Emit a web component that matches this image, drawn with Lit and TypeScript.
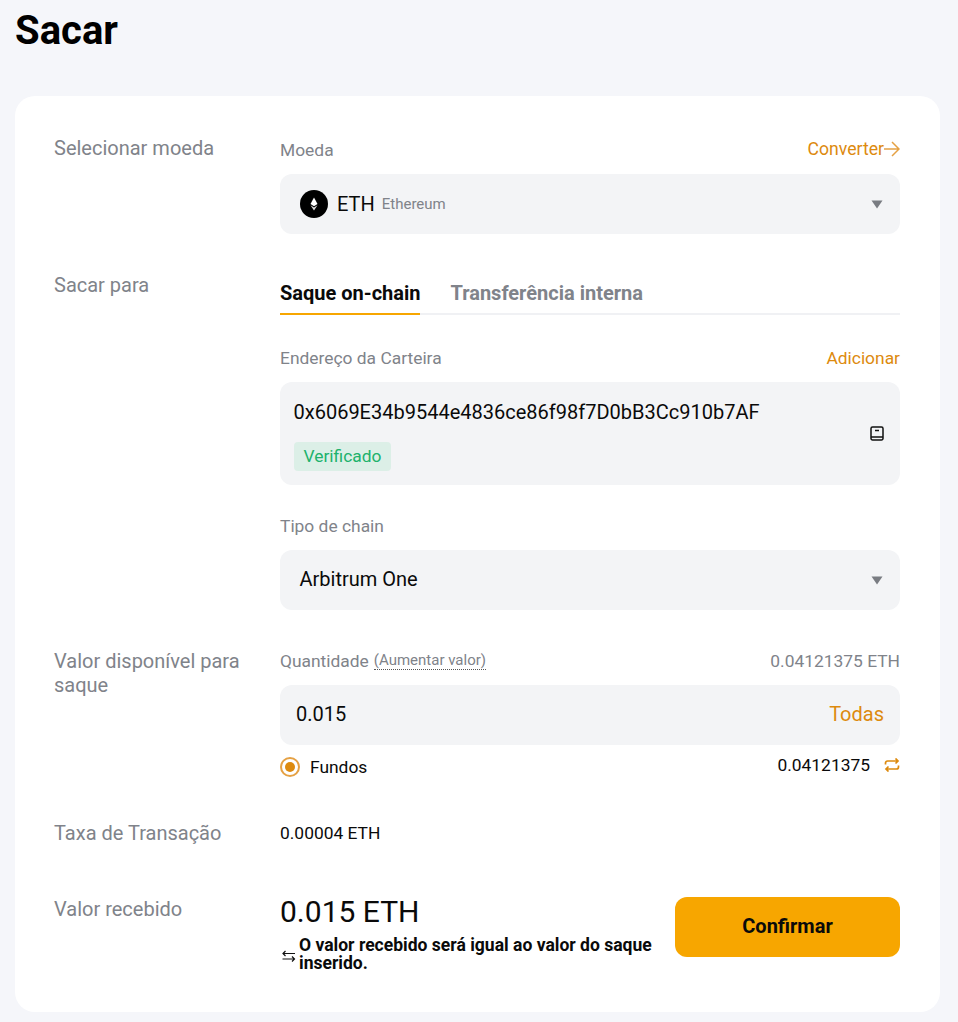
import { LitElement, html, css } from "lit";
import { customElement } from "lit/decorators.js";

const caret = html`<svg class="caret" width="12" height="9" viewBox="0 0 12 9"><path d="M0.5 0.5h11L6 8.5z" fill="#797c82"/></svg>`;

@customElement("app-root")
export class AppRoot extends LitElement {
  static styles = css`
    :host { display: block; width: 958px; height: 1022px; background: #f5f6fa; font-family: Roboto, "Liberation Sans", sans-serif; color: #0a0a0a; overflow: hidden; }
    * { box-sizing: border-box; }
    h1 { margin: 0; padding: 9px 0 0 15px; height: 96px; font-size: 40px; line-height: 44px; font-weight: 700; color: #000; }
    .card { margin-left: 15px; width: 925px; height: 916px; background: #fff; border-radius: 20px; padding: 40px 40px 0 39px; }
    .row { display: flex; }
    .row2 { margin-top: 39px; }
    .row3 { margin-top: 28px; }
    .row4 { margin-top: 42px; }
    .row5 { margin-top: 53px; }
    .side { width: 226px; flex: none; font-size: 20px; line-height: 24px; color: #80838a; padding-right: 20px; }
    .side.two { margin-top: 11px; }
    .side.five { margin-top: -1px; }
    .main { flex: 1; min-width: 0; }
    .main.first { margin-top: 2px; }
    .main.amount { margin-top: 11px; }
    .lab { display: flex; justify-content: space-between; align-items: center; height: 24px; font-size: 17.4px; color: #80838a; }
    .lab.after-tabs { margin-top: 31px; }
    .lab.after-addr { margin-top: 29px; }
    .link { color: #dd8a0e; }
    .convert { display: flex; align-items: center; margin-top: -2px; font-size: 17.6px; }
    .field { background: #f3f4f6; border-radius: 12px; height: 60px; margin-top: 12px; display: flex; align-items: center; padding: 0 17px 0 20px; }
    .coin { width: 28px; height: 28px; flex: none; margin-right: 9px; }
    .sym { font-size: 20px; }
    .chain { font-size: 20px; margin: 0 0 2px -0.5px; }
    .name { font-size: 15px; color: #80838a; margin-left: 7px; }
    .caret { margin-left: auto; }
    .tabs { display: flex; gap: 30px; border-bottom: 2px solid #f0f1f4; height: 42px; font-size: 20px; font-weight: 700; line-height: 28px; color: #80838a; }
    .tab { height: 42px; padding-top: 6px; }
    .tab.on { color: #0a0a0a; border-bottom: 2px solid #f7a600; }
    .addr { background: #f3f4f6; border-radius: 12px; height: 103px; margin-top: 12px; padding: 17px 14px 0 13.5px; position: relative; }
    .addr .v { font-size: 20px; line-height: 26px; }
    .tag { display: inline-block; margin-top: 17px; background: #dcefe7; color: #20b26c; border-radius: 4px; font-size: 17.4px; line-height: 29px; height: 29px; padding: 0 10px; }
    .book { position: absolute; right: 16px; top: 44px; }
    .amt { font-size: 20px; justify-content: space-between; padding: 0 16px 2px 16px; }
    .tip { font-size: 15px; margin-left: 5px; border-bottom: 1px dotted #555; line-height: 17px; }
    .hg { display: flex; align-items: center; height: 24px; }
    .balance { display: flex; justify-content: space-between; align-items: center; height: 24px; margin-top: 10px; font-size: 17.4px; }
    .radio { display: flex; align-items: center; gap: 10px; }
    .r { width: 20px; height: 20px; border-radius: 50%; border: 2px solid #e5a144; display: flex; align-items: center; justify-content: center; }
    .r i { width: 10px; height: 10px; border-radius: 50%; background: #dd8a0e; display: block; }
    .bal { display: flex; align-items: center; gap: 14px; margin-top: -5px; }
    .fee { font-size: 17.4px; line-height: 24px; margin-top: 0; }
    .recv { display: flex; justify-content: space-between; }
    .big { font-size: 30px; line-height: 30px; margin-top: -1px; }
    .note { display: flex; align-items: center; width: 380px; margin-top: 9px; font-size: 17.55px; line-height: 18px; font-weight: 700; }
    .note svg { flex: none; margin: 5px 3px 0 1px; }
    button { width: 225px; height: 60px; border: 0; border-radius: 12px; background: #f7a600; color: #0a0a0a; font: 700 20px Roboto, sans-serif; margin-top: -1px; padding: 0 0 2px; }
  `;

  render() {
    return html`
      <h1>Sacar</h1>
      <div class="card">
        <div class="row">
          <div class="side">Selecionar moeda</div>
          <div class="main first">
            <div class="lab"><span>Moeda</span><span class="link convert">Converter<svg width="16" height="16" viewBox="0 0 16 16" fill="none" stroke="#e5a144" stroke-width="1.5"><path d="M0 8h15M8 1l7 7-7 7"/></svg></span></div>
            <div class="field">
              <svg class="coin" viewBox="0 0 28 28"><circle cx="14" cy="14" r="14" fill="#000"/><path d="M14 7.500l-3.500 6.500 3.500 2.200 3.500-2.200z" fill="#fff"/><path d="M14 17.500l-3.500-2.200 3.500 5.200 3.500-5.200z" fill="#ddd"/></svg>
              <span class="sym">ETH</span><span class="name">Ethereum</span>${caret}
            </div>
          </div>
        </div>
        <div class="row row2">
          <div class="side">Sacar para</div>
          <div class="main">
            <div class="tabs"><span class="tab on">Saque on-chain</span><span class="tab">Transferência interna</span></div>
            <div class="lab after-tabs"><span>Endereço da Carteira</span><span class="link">Adicionar</span></div>
            <div class="addr">
              <div class="v">0x6069E34b9544e4836ce86f98f7D0bB3Cc910b7AF</div>
              <span class="tag">Verificado</span>
              <svg class="book" width="14" height="15" viewBox="0 0 14 15" fill="none" stroke="#111" stroke-width="1.5"><path d="M1 12.500V2.500A1.500 1.500 0 0 1 2.500 1h9A1.500 1.500 0 0 1 13 2.500v10A1.500 1.500 0 0 1 11.500 14h-9A1.500 1.500 0 0 1 1 12.500zM1 11h12M5 4.500h4"/></svg>
            </div>
            <div class="lab after-addr"><span>Tipo de chain</span></div>
            <div class="field"><span class="chain">Arbitrum One</span>${caret}</div>
          </div>
        </div>
        <div class="row row3">
          <div class="side two">Valor disponível para saque</div>
          <div class="main amount">
            <div class="lab"><span class="hg"><span>Quantidade</span><span class="tip">(Aumentar valor)</span></span><span>0.04121375 ETH</span></div>
            <div class="field amt"><span>0.015</span><span class="link">Todas</span></div>
            <div class="balance">
              <span class="radio"><span class="r"><i></i></span>Fundos</span>
              <span class="bal"><span>0.04121375</span><svg width="16" height="14" viewBox="0 0 16 14" fill="none" stroke="#dd8a0e" stroke-width="1.700"><path d="M1.500 6.500V5a2 2 0 0 1 2-2H14M11.500 0.500L14 3l-2.500 2.500M14.500 7.500V9a2 2 0 0 1-2 2H2M4.500 8.500L2 11l2.500 2.500"/></svg></span>
            </div>
          </div>
        </div>
        <div class="row row4">
          <div class="side">Taxa de Transação</div>
          <div class="main fee">0.00004 ETH</div>
        </div>
        <div class="row row5">
          <div class="side five">Valor recebido</div>
          <div class="main recv">
            <div>
              <div class="big">0.015 ETH</div>
              <div class="note"><svg width="15" height="15" viewBox="0 0 15 15" fill="none" stroke="#111" stroke-width="1.200"><path d="M14 4.500H2M4.500 2L2 4.500 4.500 7M1.500 10h12M11 7.500l2.500 2.500L11 12.500"/></svg><span>O valor recebido será igual ao valor do saque inserido.</span></div>
            </div>
            <button>Confirmar</button>
          </div>
        </div>
      </div>
    `;
  }
}
